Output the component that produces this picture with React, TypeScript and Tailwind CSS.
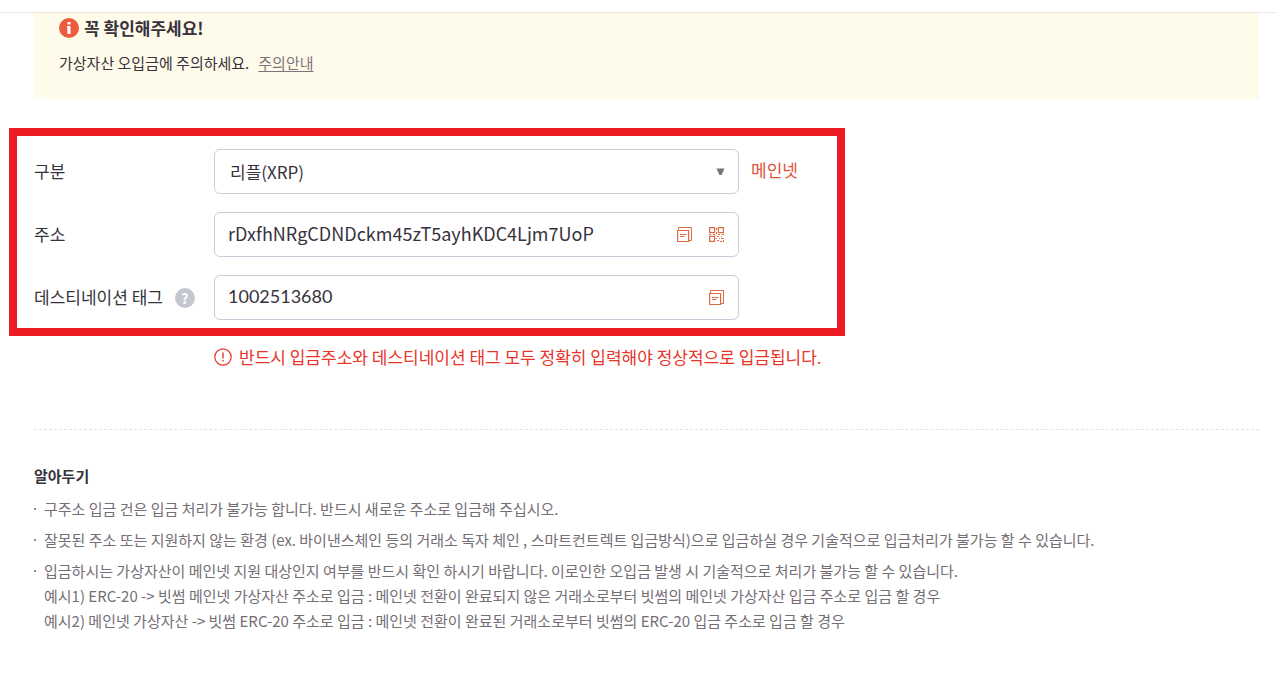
import type { ReactNode } from "react";

const notes = [
  ["구주소 입금 건은 입금 처리가 불가능 합니다. 반드시 새로운 주소로 입금해 주십시오."],
  [
    "잘못된 주소 또는 지원하지 않는 환경 (ex. 바이낸스체인 등의 거래소 독자 체인 , 스마트컨트렉트 입금방식)으로 입금하실 경우 기술적으로 입금처리가 불가능 할 수 있습니다.",
  ],
  [
    "입금하시는 가상자산이 메인넷 지원 대상인지 여부를 반드시 확인 하시기 바랍니다. 이로인한 오입금 발생 시 기술적으로 처리가 불가능 할 수 있습니다.",
    "예시1) ERC-20 -> 빗썸 메인넷 가상자산 주소로 입금 : 메인넷 전환이 완료되지 않은 거래소로부터 빗썸의 메인넷 가상자산 입금 주소로 입금 할 경우",
    "예시2) 메인넷 가상자산 -> 빗썸 ERC-20 주소로 입금 : 메인넷 전환이 완료된 거래소로부터 빗썸의 ERC-20 입금 주소로 입금 할 경우",
  ],
];

function InfoIcon() {
  return (
    <svg width="20" height="20" viewBox="0 0 20 20" aria-hidden="true">
      <circle cx="10" cy="10" r="10" fill="#ee5a3c" />
      <path d="M8.5 4h3v2.5h-3zM8 8h3.5v8h-3z" fill="#fff" />
    </svg>
  );
}

function WarningIcon() {
  return (
    <svg width="18" height="18" viewBox="0 0 18 18" fill="none" stroke="#e8352a" aria-hidden="true">
      <circle cx="9" cy="9" r="8.2" strokeWidth="1.2" />
      <path d="M9 4.5v6M9 12v1.5" strokeWidth="1.4" />
    </svg>
  );
}

function CopyIcon() {
  return (
    <svg width="15" height="15" viewBox="0 0 15 15" fill="none" stroke="#dc6a45" aria-hidden="true">
      <path d="M1.5 3V.5h13V13.5H12" />
      <path d="M.6 3.5h11v11H.6z" strokeWidth="1.2" />
      <path d="M3 7.5h6.5M3 9.5h4.5" />
    </svg>
  );
}

function QrIcon() {
  return (
    <svg width="15" height="15" viewBox="0 0 15 15" fill="none" stroke="#dc6a45" aria-hidden="true">
      <path d="M.6.6h5v5h-5zM9.4.6h5v5h-5zM.6 9.4h5v5h-5z" strokeWidth="1.2" />
      <path d="M7.5 1v2M7.5 5v2M0 7.5h2M4 7.5h2M9 7.5h2M13 7.5h2M8 9.5h2M12 9.5h1M10 11.5h1M12 11.5h3M7.5 11v1M8 13.5h2M11 14.5h2M14.5 13v2" />
    </svg>
  );
}

type FieldRowProps = {
  id: string;
  label: string;
  help?: boolean;
  children: ReactNode;
};

function FieldRow({ id, label, help, children }: FieldRowProps) {
  return (
    <div className="flex items-center">
      <div className="flex w-[180px] shrink-0 items-center gap-3">
        <label htmlFor={id} className="pb-0.5 text-[17px]">
          {label}
        </label>
        {help && (
          <button
            type="button"
            aria-label="도움말"
            className="flex size-5 items-center justify-center rounded-full bg-[#c3c8d0] text-sm font-bold text-white"
          >
            ?
          </button>
        )}
      </div>
      {children}
    </div>
  );
}

const boxClass =
  "flex h-[45px] min-w-0 max-w-[525px] flex-1 items-center rounded-md border border-[#c5d0da] bg-white";

export default function App() {
  return (
    <div className="min-h-screen bg-white pt-3 font-['Noto_Sans_CJK_KR',sans-serif] text-[#37323c]">
      <header className="border-t border-[#ebe7e0]">
        <section className="ml-[34px] mr-[17px] bg-[#fffbea] px-[25px] pt-1 pb-6">
          <h2 className="flex items-center gap-[5px] text-[17px] leading-[22px] font-bold">
            <InfoIcon />
            꼭 확인해주세요!
          </h2>
          <p className="mt-3 flex gap-[9px] text-[15px] leading-6">
            가상자산 오입금에 주의하세요.
            <a href="#caution" className="text-[#7d747b] underline underline-offset-2">
              주의안내
            </a>
          </p>
        </section>
      </header>

      <main className="pb-12">
        <form className="mt-[29px] ml-[9px] flex max-w-[836px] flex-col gap-[18px] border-8 border-[#ed1c24] px-[17px] pt-[13px] pb-2">
          <FieldRow id="coin" label="구분">
            <div className={`${boxClass} relative`}>
              <select
                id="coin"
                defaultValue="XRP"
                className="h-full w-full appearance-none bg-transparent px-[15px] text-[17px] outline-none"
              >
                <option value="XRP">리플(XRP)</option>
              </select>
              <svg
                width="9"
                height="7"
                viewBox="0 0 9 7"
                className="pointer-events-none absolute right-[13px]"
                aria-hidden="true"
              >
                <path d="M.5 .5h8L5.5 7h-2z" fill="#7a7279" />
              </svg>
            </div>
            <span className="ml-3 pb-1 text-[17px] text-[#e0523a]">메인넷</span>
          </FieldRow>

          <FieldRow id="address" label="주소">
            <div className={boxClass}>
              <input
                id="address"
                readOnly
                defaultValue="rDxfhNRgCDNDckm45zT5ayhKDC4Ljm7UoP"
                className="h-full min-w-0 flex-1 px-[13px] pb-[3px] text-lg outline-none"
              />
              <button type="button" aria-label="주소 복사" className="mr-[17px]">
                <CopyIcon />
              </button>
              <button type="button" aria-label="QR 코드" className="mr-[14px]">
                <QrIcon />
              </button>
            </div>
          </FieldRow>

          <FieldRow id="tag" label="데스티네이션 태그" help>
            <div className={boxClass}>
              <input
                id="tag"
                readOnly
                defaultValue="1002513680"
                className="h-full min-w-0 flex-1 px-[13px] pb-[3px] font-[Lato,sans-serif] text-lg outline-none"
              />
              <button type="button" aria-label="태그 복사" className="mr-[14px]">
                <CopyIcon />
              </button>
            </div>
          </FieldRow>
        </form>

        <p className="mt-[9px] ml-[214px] flex items-center gap-[7px] text-[17px] leading-6 text-[#e8352a]">
          <WarningIcon />
          반드시 입금주소와 데스티네이션 태그 모두 정확히 입력해야 정상적으로 입금됩니다.
        </p>

        <section className="mt-[60px] mr-[17px] ml-[34px] border-t border-dashed border-[#e3e3e6] pt-[34px]">
          <h3 className="text-[15px] leading-6 font-bold">알아두기</h3>
          <ul className="mt-2 flex flex-col gap-1.5 text-[15px] leading-[25px] text-[#756e76]">
            {notes.map((lines) => (
              <li key={lines[0]} className="flex gap-2">
                <span className="mt-3 size-0.5 shrink-0 bg-[#8d868c]" />
                <div>
                  {lines.map((line) => (
                    <p key={line}>{line}</p>
                  ))}
                </div>
              </li>
            ))}
          </ul>
        </section>
      </main>
    </div>
  );
}
